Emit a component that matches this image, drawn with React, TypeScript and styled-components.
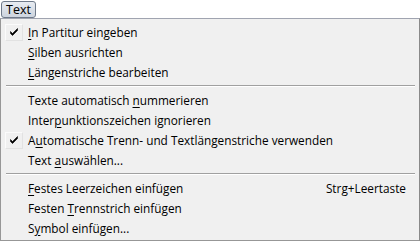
import React from "react";
import styled, { createGlobalStyle } from "styled-components";

const GlobalStyle = createGlobalStyle`
  html, body {
    margin: 0;
    padding: 0;
    background: #ffffff;
  }
  body {
    font-family: "Open Sans", "Noto Sans", sans-serif;
    font-size: 11.8px;
    color: #000000;
  }
`;

const Page = styled.div`
  width: 420px;
  height: 241px;
  overflow: hidden;
`;

const MenuBar = styled.div`
  height: 18px;
  display: flex;
  align-items: flex-start;
  padding-left: 1px;
  padding-top: 1px;
  box-sizing: border-box;
`;

const MenuTitle = styled.div`
  width: 35px;
  height: 17px;
  box-sizing: border-box;
  border: 1px solid #6f7a8a;
  border-radius: 3px;
  background: linear-gradient(#e8ecf2, #cdd4de);
  display: flex;
  align-items: center;
  justify-content: center;
  line-height: 15px;
  font-size: 12.5px;
`;

const Dropdown = styled.div`
  height: 223px;
  box-sizing: border-box;
  background: #f0f0f0;
  border: 1px solid #979797;
  border-top-color: #a0a4b0;
  border-right-color: #8a8a8a;
  padding: 3px 2px 2px 2px;
  display: flex;
  flex-direction: column;
`;

const Item = styled.div`
  height: 20px;
  display: flex;
  align-items: center;
`;

const CheckCol = styled.div`
  width: 25px;
  height: 20px;
  display: flex;
  align-items: center;
  justify-content: flex-start;
  padding-left: 2px;
  box-sizing: border-box;
`;

const CheckBox = styled.div<{ $on?: boolean }>`
  width: 18px;
  height: 17px;
  box-sizing: border-box;
  border: 1px solid ${(p) => (p.$on ? "#fbfbfb" : "transparent")};
  border-right-color: ${(p) => (p.$on ? "#e2e2e2" : "transparent")};
  border-bottom-color: ${(p) => (p.$on ? "#e2e2e2" : "transparent")};
  display: flex;
  align-items: center;
  justify-content: center;
`;

const Label = styled.span`
  flex: 1;
  white-space: nowrap;
  line-height: 20px;
  u {
    text-decoration: underline;
    text-underline-offset: 2px;
  }
`;

const Shortcut = styled.span`
  white-space: nowrap;
  padding-right: 11px;
  line-height: 20px;
`;

const Separator = styled.div`
  height: 8px;
  display: flex;
  align-items: center;
  padding: 0 2px 0 3px;

  &::after {
    content: "";
    flex: 1;
    height: 0;
    border-top: 1px solid #a0a0a0;
    border-bottom: 1px solid #ffffff;
  }
`;

const Check = () => (
  <svg width="9" height="8" viewBox="0 0 9 8">
    <path
      d="M0.5 3.5 L2.5 5.5 L7.5 0.5 L7.5 2.5 L2.5 7.5 L0.5 5.5 Z"
      fill="#000"
      stroke="#000"
      strokeWidth="0.6"
    />
  </svg>
);

type Entry =
  | { kind: "sep" }
  | {
      kind: "item";
      before: string;
      key: string;
      after: string;
      checked?: boolean;
      shortcut?: string;
    };

const entries: Entry[] = [
  { kind: "item", before: "", key: "I", after: "n Partitur eingeben", checked: true },
  { kind: "item", before: "", key: "S", after: "ilben ausrichten" },
  { kind: "item", before: "", key: "L", after: "ängenstriche bearbeiten" },
  { kind: "sep" },
  { kind: "item", before: "Texte automatisch ", key: "n", after: "ummerieren" },
  { kind: "item", before: "Inter", key: "p", after: "unktionszeichen ignorieren" },
  {
    kind: "item",
    before: "A",
    key: "u",
    after: "tomatische Trenn- und Textlängenstriche verwenden",
    checked: true,
  },
  { kind: "item", before: "Text ", key: "a", after: "uswählen..." },
  { kind: "sep" },
  {
    kind: "item",
    before: "",
    key: "F",
    after: "estes Leerzeichen einfügen",
    shortcut: "Strg+Leertaste",
  },
  { kind: "item", before: "Festen ", key: "T", after: "rennstrich einfügen" },
  { kind: "item", before: "S", key: "y", after: "mbol einfügen..." },
];

export default function App() {
  return (
    <Page>
      <GlobalStyle />
      <MenuBar>
        <MenuTitle>Text</MenuTitle>
      </MenuBar>
      <Dropdown>
        {entries.map((e, i) =>
          e.kind === "sep" ? (
            <Separator key={i} />
          ) : (
            <Item key={i}>
              <CheckCol>
                <CheckBox $on={e.checked}>{e.checked && <Check />}</CheckBox>
              </CheckCol>
              <Label>
                {e.before}
                <u>{e.key}</u>
                {e.after}
              </Label>
              {e.shortcut && <Shortcut>{e.shortcut}</Shortcut>}
            </Item>
          )
        )}
      </Dropdown>
    </Page>
  );
}
